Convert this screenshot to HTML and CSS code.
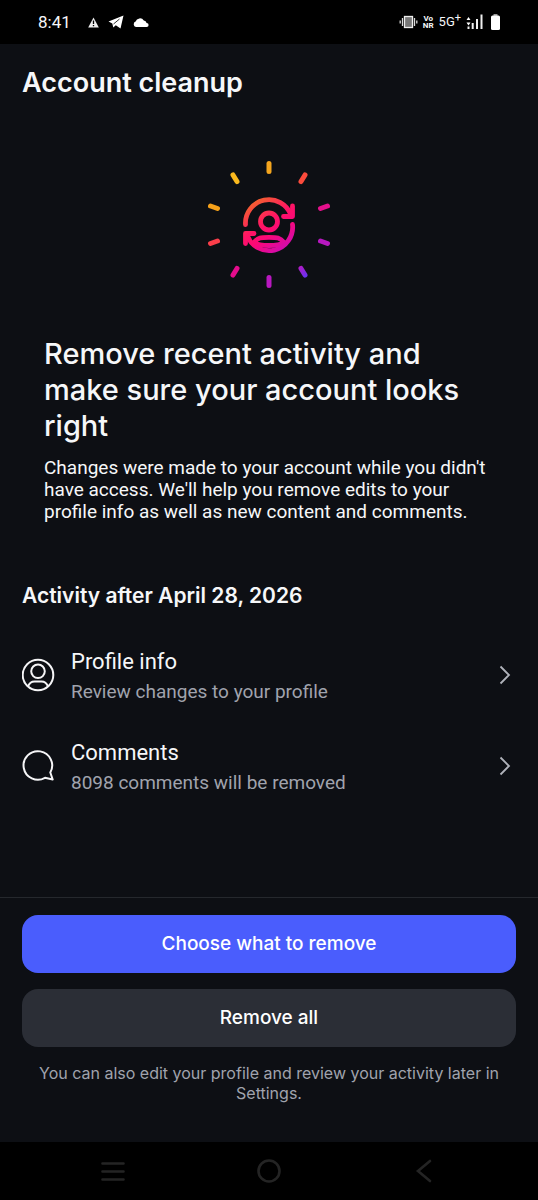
FILE: index.html
```html
<!DOCTYPE html>
<html lang="en">
<head>
<meta charset="utf-8">
<meta name="viewport" content="width=device-width, initial-scale=1">
<title>Account cleanup</title>
<link rel="stylesheet" href="styles.css">
</head>
<body>
<div class="screen">
  <div class="status">
    <div class="status-left">
      <span class="clock">8:41</span>
      <svg width="11" height="11" viewBox="0 0 11 11" aria-hidden="true"><path d="M5.500 0.500L10.800 10.500H0.200Z" fill="#eee"/><path d="M5.500 3.500V7M5.500 8V9.300" stroke="#000" stroke-width="1.300"/></svg>
      <svg width="16" height="14" viewBox="0 0 16 14" aria-hidden="true"><path d="M15.500 0.500L0.500 6.500L4.300 8.500L5.300 12.500L7.800 10.300L12.500 13.500Z" fill="#fff"/><path d="M5.500 9L11.500 4" stroke="#000" stroke-width="0.800"/></svg>
      <svg width="16" height="9" viewBox="0 0 16 9" aria-hidden="true"><path d="M3 9A2.800 2.800 0 0 1 2.600 3.600A4.500 4.500 0 0 1 10.800 2.600A3.200 3.200 0 0 1 13.600 5A2 2 0 0 1 13.600 9Z" fill="#fff"/></svg>
    </div>
    <div class="status-right">
      <svg width="19" height="14" viewBox="0 0 19 14" aria-hidden="true"><rect x="5.500" y="1.500" width="8" height="11" fill="#777" stroke="#eee" stroke-width="1.300"/><path d="M3.500 3V11M15.500 3V11M1.200 5.500V8.500M17.800 5.500V8.500" stroke="#ddd" stroke-width="1.300"/></svg>
      <span class="vonr"><span>Vo</span><span>NR</span></span>
      <span class="network">5G<sup>+</sup></span>
      <svg width="17" height="15" viewBox="0 0 17 15" aria-hidden="true"><path d="M0.500 6L2.500 3L4.500 6ZM0.500 8.500L2.500 11.500L4.500 8.500Z" fill="#fff"/><path d="M2.500 12.500V15M6.700 9V15M11 5V15M15.500 0.500V15" stroke="#eee" stroke-width="2"/></svg>
      <svg class="battery" width="9" height="16" viewBox="0 0 9 16" aria-hidden="true"><path d="M2.500 0H6.500V2H2.500Z" fill="#999"/><rect y="1.500" width="9" height="14.500" rx="1.500" fill="#fff"/></svg>
    </div>
  </div>

  <header class="topbar"><h1>Account cleanup</h1></header>

  <main class="content">
    <svg class="hero" width="160" height="160" viewBox="-1 0 160 160" fill="none" aria-hidden="true">
      <defs>
        <linearGradient id="warm" gradientUnits="userSpaceOnUse" x1="60" y1="55" x2="95" y2="106">
          <stop offset="0" stop-color="#f26a28"/><stop offset="0.450" stop-color="#ff1464"/><stop offset="0.650" stop-color="#fb0878"/><stop offset="1" stop-color="#cc0cb4"/>
        </linearGradient>
        <linearGradient id="violet" gradientUnits="userSpaceOnUse" x1="109" y1="122" x2="117" y2="132">
          <stop offset="0" stop-color="#b41ac4"/><stop offset="1" stop-color="#6234f6"/>
        </linearGradient>
      </defs>
      <g stroke-width="5" stroke-linecap="round">
        <path d="M79 18.500V26.500" stroke="#f4a51e"/>
        <path d="M115 30L111 36.500" stroke="#fb4b3c"/>
        <path d="M137.500 61L130.500 63.500" stroke="#e5108c"/>
        <path d="M130.500 96L137.500 98.500" stroke="#b718c0"/>
        <path d="M111 123.500L115 130" stroke="url(#violet)"/>
        <path d="M79 132.500V140.500" stroke="#b818c0"/>
        <path d="M47 123.500L43 130" stroke="#e40c8c"/>
        <path d="M27.500 96L20.500 98.500" stroke="#fb3e4a"/>
        <path d="M20.500 61L27.500 63.500" stroke="#f5a11a"/>
        <path d="M43 30L47 36.500" stroke="#f9b91e"/>
      </g>
      <g stroke="url(#warm)" stroke-width="4.800" stroke-linecap="round" stroke-linejoin="round">
        <path d="M55.500 79.500A23.500 23.500 0 0 1 101 70"/>
        <path d="M102.500 61V71.500H93.500"/>
        <path d="M102.500 79.500A23.500 23.500 0 0 1 57 90"/>
        <path d="M55.500 98.500V88.500H64"/>
        <circle cx="79" cy="76.500" r="8.500"/>
        <path d="M64 97.500C68 92.300 71 92.300 79 92.300C87 92.300 90 92.300 94 97.500C88 101.500 70 101.500 64 97.500Z"/>
      </g>
    </svg>

    <section class="intro">
      <h2>Remove recent activity and make sure your account looks right</h2>
      <p>Changes were made to your account while you didn't have access. We'll help you remove edits to your profile info as well as new content and comments.</p>
    </section>

    <section class="activity">
      <h3>Activity after April 28, 2026</h3>
      <a class="row" href="#profile">
        <svg width="34" height="34" viewBox="1 0 34 34" fill="none" stroke="#f5f5f7" stroke-width="2" aria-hidden="true"><circle cx="17" cy="17" r="15.300"/><circle cx="17" cy="13.300" r="6.800"/><path d="M7 28.500C8.500 24.500 10.500 23.500 13.500 23.500H20.500C23.500 23.500 25.500 24.500 27 28.500"/></svg>
        <span class="label"><span class="name">Profile info</span><span class="detail">Review changes to your profile</span></span>
        <svg width="12" height="20" viewBox="0 0 12 20" fill="none" stroke="#b0b3bb" stroke-width="1.800" aria-hidden="true"><path d="M1.500 1.500L10 10L1.500 18.500"/></svg>
      </a>
      <a class="row" href="#comments">
        <svg width="34" height="34" viewBox="0 0 34 34" fill="none" stroke="#f5f5f7" stroke-width="2" stroke-linejoin="round" aria-hidden="true"><path d="M28.300 23.500A14.300 14.300 0 1 0 23 28.850L30.700 30.500Z"/></svg>
        <span class="label"><span class="name">Comments</span><span class="detail">8098 comments will be removed</span></span>
        <svg width="12" height="20" viewBox="0 0 12 20" fill="none" stroke="#b0b3bb" stroke-width="1.800" aria-hidden="true"><path d="M1.500 1.500L10 10L1.500 18.500"/></svg>
      </a>
    </section>
  </main>

  <footer class="actions">
    <button class="btn primary" type="button">Choose what to remove</button>
    <button class="btn" type="button">Remove all</button>
    <p>You can also edit your profile and review your activity later in Settings.</p>
  </footer>

  <nav class="sysnav" aria-label="System">
    <button type="button" aria-label="Recent apps"><svg width="24" height="24" viewBox="0 0 24 24" stroke="#242424" stroke-width="2.600" stroke-linecap="round"><path d="M1.500 4.500H22.500M1.500 12.500H22.500M1.500 20.500H22.500"/></svg></button>
    <button type="button" aria-label="Home"><svg width="24" height="24" viewBox="0 0 24 24" fill="none" stroke="#242424" stroke-width="2.600"><circle cx="12" cy="12" r="10.500"/></svg></button>
    <button type="button" aria-label="Back"><svg width="24" height="24" viewBox="0 0 24 24" fill="none" stroke="#242424" stroke-width="2.600" stroke-linecap="round"><path d="M17 2L5 12L17 22"/></svg></button>
  </nav>
</div>
</body>
</html>
```
FILE: styles.css
```css
* { box-sizing: border-box; }
body { margin: 0; background: #000; color: #f6f7f9; font-family: Roboto, "Liberation Sans", sans-serif; }
h1, h2, h3, p { margin: 0; }
svg { display: block; flex: none; }
.screen { display: flex; flex-direction: column; min-height: 100vh; background: #0d0f14; }

.status { display: flex; justify-content: space-between; align-items: center; height: 44px; padding: 0 38px; background: #000; }
.status-left, .status-right { display: flex; align-items: center; }
.status-left { gap: 9px; }
.status-right { gap: 5px; }
.clock { font-size: 17px; font-weight: 400; margin-right: 8px; }
.vonr { display: flex; flex-direction: column; align-items: center; font-size: 8px; line-height: 7px; font-weight: 700; }
.network { font-size: 13px; line-height: 16px; }
.network sup { font-size: 11px; line-height: 8px; }
.battery { margin-left: 3px; }

.topbar { padding: 23px 22px 0; }
h1 { font: 600 27px/32px Inter, sans-serif; }
h2 { font: 500 29px/36px Inter, sans-serif; }
h3 { font: 600 21px/28px Inter, sans-serif; }

.content { flex: 1; display: flex; flex-direction: column; }
.hero { align-self: center; margin-top: 46px; }
.intro { padding: 31px 44px 0; }
.intro p { margin-top: 13px; font-size: 19px; line-height: 22px; }
.activity { padding: 59px 22px 0; }
.row { display: flex; align-items: center; gap: 15px; height: 91px; padding-right: 5px; color: inherit; text-decoration: none; }
h3 + .row { margin-top: 19px; }
.label { flex: 1; display: flex; flex-direction: column; gap: 4px; padding-top: 2px; }
.name { font-size: 22px; line-height: 28px; }
.detail { font-size: 19px; line-height: 24px; color: #a0a3ad; }

.actions { display: flex; flex-direction: column; gap: 16px; padding: 17px 22px 39px; border-top: 1px solid #25282d; }
.btn { height: 58px; border: 0; border-radius: 16px; background: #2b2e36; color: #fff; font: 500 19px/24px Inter, sans-serif; }
.btn.primary { background: #4a5dfd; }
.actions p { font: 400 16px/20px Inter, sans-serif; color: #a0a3ad; text-align: center; }

.sysnav { display: flex; justify-content: space-between; align-items: center; height: 58px; padding: 0 101px; background: #000; }
.sysnav button { padding: 0; border: 0; background: none; }
```
